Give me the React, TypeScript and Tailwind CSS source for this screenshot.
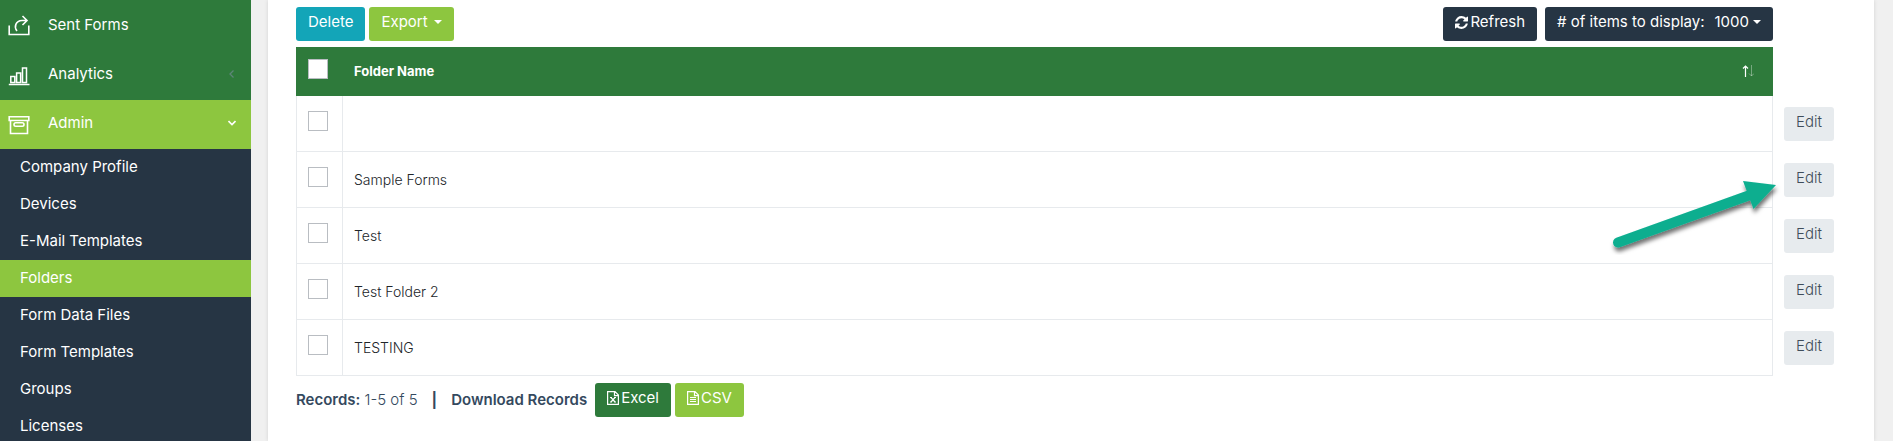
import React from 'react';

const subItems = [
  'Company Profile',
  'Devices',
  'E-Mail Templates',
  'Folders',
  'Form Data Files',
  'Form Templates',
  'Groups',
  'Licenses',
];

const folders = ['', 'Sample Forms', 'Test', 'Test Folder 2', 'TESTING'];

function ShareIcon() {
  return (
    <svg className="h-6 w-6" viewBox="0 0 24 24" fill="none" stroke="currentColor" strokeWidth="1.6">
      <path d="M1.200 12.500v9h19.600v-9" />
      <path d="M9 18C5.800 14 7.500 7.800 14 7.500h4.500M14.500 3 19 7.500 14.500 12" />
    </svg>
  );
}

function ChartIcon() {
  return (
    <svg className="h-6 w-6" viewBox="0 0 24 24" fill="none" stroke="currentColor" strokeWidth="1.5">
      <path d="M.800 22.500h20.700M2.800 20.500v-6h4v6zM8.600 20.500V11h4v9.500zM14.500 20.500V6h4v14.500z" />
    </svg>
  );
}

function ArchiveIcon() {
  return (
    <svg className="h-6 w-6" viewBox="0 0 24 24" fill="none" stroke="currentColor" strokeWidth="1.6">
      <path d="M1.200 5.800h19.600v3.700H1.200zM2.500 9.500v13h17v-13" />
      <rect x="6" y="11.800" width="10" height="3.500" rx="1.700" />
    </svg>
  );
}

function RefreshIcon() {
  return (
    <svg className="h-[13px] w-[13px]" viewBox="0 0 1536 1536" fill="currentColor">
      <path d="M1511 928q0 5-1 7-64 268-268 434.500t-478 166.500q-146 0-282.500-55t-243.500-157l-129 129q-19 19-45 19t-45-19-19-45v-448q0-26 19-45t45-19h448q26 0 45 19t19 45-19 45l-137 137q71 66 161 102t187 36q134 0 250-65t186-179q11-17 53-117 8-23 30-23h192q13 0 22.500 9.500t9.500 22.500zm25-800v448q0 26-19 45t-45 19h-448q-26 0-45-19t-19-45 19-45l138-138q-148-137-349-137-134 0-250 65t-186 179q-11 17-53 117-8 23-30 23h-199q-13 0-22.500-9.500t-9.500-22.500v-7q65-268 270-434.500t480-166.500q146 0 284 55.500t245 156.500l130-129q19-19 45-19t45 19 19 45z" />
    </svg>
  );
}

function FileIcon({ children }: { children: React.ReactNode }) {
  return (
    <svg className="h-[14px] w-3" viewBox="0 0 12 14" fill="none" stroke="currentColor" strokeWidth="1.2">
      <path d="M.600.600h7.400l3.400 3.400v9.400H.600zM7.500.600v4h4" />
      {children}
    </svg>
  );
}

function Caret() {
  return (
    <svg className="h-1 w-2" viewBox="0 0 8 4" fill="currentColor">
      <path d="M0 0h8L4 4z" />
    </svg>
  );
}

function PointerArrow() {
  return (
    <svg className="pointer-events-none absolute top-[19px] -left-[170px] h-[90px] w-[180px]" viewBox="0 0 180 90">
      <defs>
        <filter id="arrow-shadow" x="-10%" y="-10%" width="120%" height="130%">
          <feDropShadow dx="1" dy="4" stdDeviation="2" floodColor="#000" floodOpacity="0.55" />
        </filter>
      </defs>
      <g filter="url(#arrow-shadow)" fill="#0aae8f">
        <path d="M15 71.500 147 24" stroke="#0aae8f" strokeWidth="10" strokeLinecap="round" />
        <path d="M140 10 173 14 150.500 38z" />
      </g>
    </svg>
  );
}

const btn = 'flex h-[34px] items-center rounded-[3px] px-3 pb-1';
const box = 'block h-5 w-5 appearance-none border border-[#b9bdc2] bg-white checked:bg-[#8dc63f]';

export default function App() {
  return (
    <div className="flex h-screen overflow-hidden bg-[#f0f0f0] font-['Inter','Noto_Sans',sans-serif] text-[15px] leading-5 text-[#34495e]">
      <nav className="w-[251px] shrink-0 bg-[#263544] text-white">
        <div className="bg-[#2e7a3b] pt-0.5">
          <a href="#sent" className="flex h-[49px] items-center gap-4 px-2 pb-1">
            <ShareIcon />
            Sent Forms
          </a>
          <a href="#analytics" className="flex h-[49px] items-center gap-4 px-2 pb-1">
            <ChartIcon />
            <span className="grow">Analytics</span>
            <svg className="mr-[7px] h-2 w-2 text-[#5d8578]" viewBox="0 0 8 8" fill="none" stroke="currentColor" strokeWidth="1.300">
              <path d="M5.500.500 2 4l3.500 3.500" />
            </svg>
          </a>
        </div>
        <a href="#admin" className="flex h-[49px] items-center gap-4 bg-[#8dc63f] px-2 pb-1">
          <ArchiveIcon />
          <span className="grow">Admin</span>
          <svg className="mr-[7px] h-2 w-2" viewBox="0 0 8 8" fill="none" stroke="currentColor" strokeWidth="1.600">
            <path d="M.500 2 4 5.500 7.500 2" />
          </svg>
        </a>
        {subItems.map((s) => (
          <a
            key={s}
            href="#admin"
            className={'flex h-[37px] items-center pb-0.5 pl-5 ' + (s === 'Folders' ? 'bg-[#8dc63f]' : '')}
          >
            {s}
          </a>
        ))}
      </nav>

      <main className="mr-[19px] ml-[17px] min-w-0 grow bg-white px-7 pt-[7px] shadow-[0_0_4px_rgba(0,0,0,0.12)]">
        <div className="mr-[73px] mb-1.5 flex items-center text-white">
          <button type="button" className={btn + ' bg-[#13a5b8]'}>Delete</button>
          <button type="button" className={btn + ' ml-1 gap-1.5 bg-[#8dc63f]'}>
            Export <Caret />
          </button>
          <button type="button" className={btn + ' ml-auto gap-0.5 bg-[#263544]'}>
            <RefreshIcon /> Refresh
          </button>
          <button type="button" className={btn + ' ml-2 gap-1 bg-[#263544]'}>
            <span className="mr-1.5"># of items to display:</span> 1000 <Caret />
          </button>
        </div>

        <table className="w-full border-separate border-spacing-0 text-left">
          <thead>
            <tr className="text-[13px] text-white">
              <th className="h-[49px] w-[47px] bg-[#2e7a3b] pb-1.5 pl-3">
                <input type="checkbox" aria-label="Select all folders" className={box} />
              </th>
              <th className="bg-[#2e7a3b] pb-0.5 pl-[11px] font-bold">
                <div className="flex items-center justify-between pr-[19px]">
                  Folder Name
                  <svg className="h-3 w-3" viewBox="0 0 12 12" fill="none" stroke="currentColor">
                    <path d="M3.500 12V1M1 3.500 3.500 1 6 3.500" strokeWidth="1.200" />
                    <path d="M9.500 0v11M7 8.500 9.500 11 12 8.500" opacity="0.350" />
                  </svg>
                </div>
              </th>
              <th className="w-[73px]" aria-label="Actions" />
            </tr>
          </thead>
          <tbody>
            {folders.map((f, i) => (
              <tr key={i}>
                <td className="h-14 border-x border-b border-[#e7eaed] pb-1.5 pl-[11px]">
                  <input type="checkbox" aria-label={'Select ' + f} className={box} />
                </td>
                <td className="border-r border-b border-[#e7eaed] pl-[11px] text-sm font-light text-[#212529]">{f}</td>
                <td className="relative pl-[11px]">
                  <button type="button" className={btn + ' bg-[#e7ebee] font-light text-[#3f4d5a]'}>Edit</button>
                  {i === 1 && <PointerArrow />}
                </td>
              </tr>
            ))}
          </tbody>
        </table>

        <div className="mt-[7px] flex items-center">
          <p>
            <b className="font-semibold">Records:</b> <span className="font-light">1-5 of 5</span>
          </p>
          <b className="mx-3.5">|</b>
          <b className="font-semibold">Download Records</b>
          <button type="button" className={btn + ' ml-2 gap-0.5 bg-[#2e7a3b] text-white'}>
            <FileIcon>
              <path d="M3 6.500h2M7 6.500h2M3 11h2M7 11h2M4 6.500 8 11M8 6.500 4 11" />
            </FileIcon>
            Excel
          </button>
          <button type="button" className={btn + ' ml-1 gap-0.5 bg-[#8dc63f] text-white'}>
            <FileIcon>
              <path d="M3 6.500h6M3 8.500h6M3 10.500h6" />
            </FileIcon>
            CSV
          </button>
        </div>
      </main>
    </div>
  );
}
